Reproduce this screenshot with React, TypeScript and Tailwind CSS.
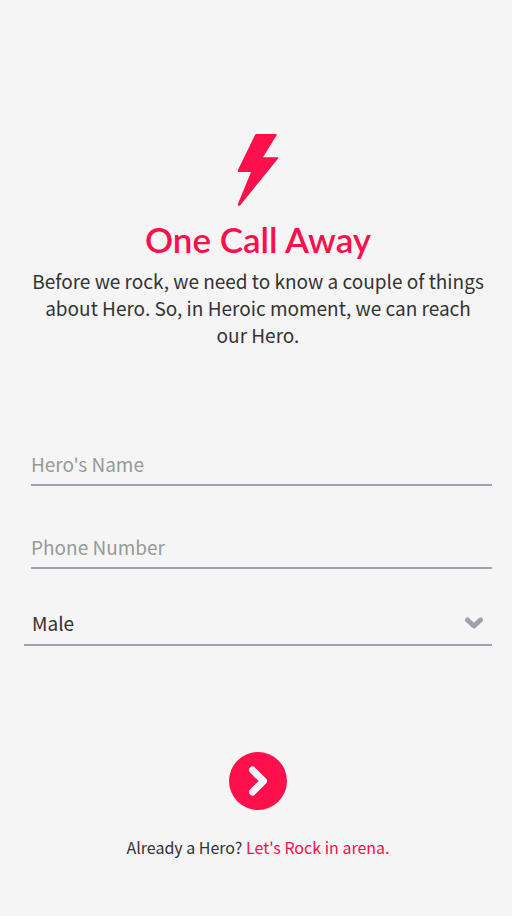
const bodyFont = "font-['Noto_Sans_CJK_SC','Noto_Sans',sans-serif]";
const fieldClass =
  "block h-12 w-full border-b-2 border-[#9f9fae] bg-transparent pt-1 text-[19px] leading-7 text-[#333333] outline-none placeholder:text-[#999999] placeholder:opacity-100";

function BoltIcon() {
  return (
    <svg className="h-[74px] w-[42px]" viewBox="0 0 42 74" fill="#ff0f4b" aria-hidden="true">
      <path d="M19.200 1H39q1.200 0 .6 1.200L26 24.300h14.600q1.100.2.5 1.300L3 72.500q-2.500 1-2.200-1.200L14 39H1.800Q.3 38.600.9 37L18 2Q18.400 1 19.200 1Z" />
    </svg>
  );
}

export default function App() {
  return (
    <main className={`flex min-h-screen flex-col bg-[#f5f5f5] pt-[133px] text-[#333333] ${bodyFont}`}>
      <header className="flex flex-col items-center pr-[26px] pl-[30px] text-center">
        <BoltIcon />
        <h1 className="mt-2 font-['Lato',sans-serif] text-[35px] leading-12 font-semibold text-[#ff0f4b]">
          One Call Away
        </h1>
        <p className="mt-1 text-[19px] leading-[27px]">
          Before we rock, we need to know a couple of things about Hero. So, in Heroic moment, we can reach our Hero.
        </p>
      </header>

      <form className="mt-[90px] flex flex-col pr-5 pl-6" onSubmit={(e) => e.preventDefault()}>
        <div className="ml-[7px] flex flex-col gap-[35px]">
          <input className={fieldClass} type="text" aria-label="Hero's Name" placeholder="Hero's Name" />
          <input className={fieldClass} type="tel" aria-label="Phone Number" placeholder="Phone Number" />
        </div>
        <div className="relative mt-[29px]">
          <select
            className="block h-12 w-full appearance-none border-b-2 border-[#9f9fae] bg-transparent px-2 pt-1 text-[19px] leading-7 outline-none"
            aria-label="Gender"
            defaultValue="Male"
          >
            <option>Male</option>
            <option>Female</option>
          </select>
          <svg
            className="pointer-events-none absolute top-[19px] right-2 h-3 w-5"
            viewBox="0 0 20 12"
            fill="none"
            stroke="#9f9fae"
            strokeWidth="5"
            strokeLinecap="round"
            strokeLinejoin="round"
            aria-hidden="true"
          >
            <path d="M3.500 3 10 9l6.500-6" />
          </svg>
        </div>
        <button
          type="submit"
          aria-label="Continue"
          className="mt-[106px] flex size-[58px] items-center justify-center self-center rounded-full bg-[#ff0f4b]"
        >
          <svg
            className="h-[30px] w-5"
            viewBox="0 0 20 30"
            fill="none"
            stroke="#f5f5f5"
            strokeWidth="7"
            strokeLinecap="round"
            strokeLinejoin="round"
            aria-hidden="true"
          >
            <path d="M4.500 4 15.500 15 4.500 26" />
          </svg>
        </button>
      </form>

      <p className="mt-[23px] pb-10 pl-1 text-center text-base leading-7">
        Already a Hero?{" "}
        <a href="#arena" className="text-[#ff0f4b]">
          Let's Rock in arena.
        </a>
      </p>
    </main>
  );
}
